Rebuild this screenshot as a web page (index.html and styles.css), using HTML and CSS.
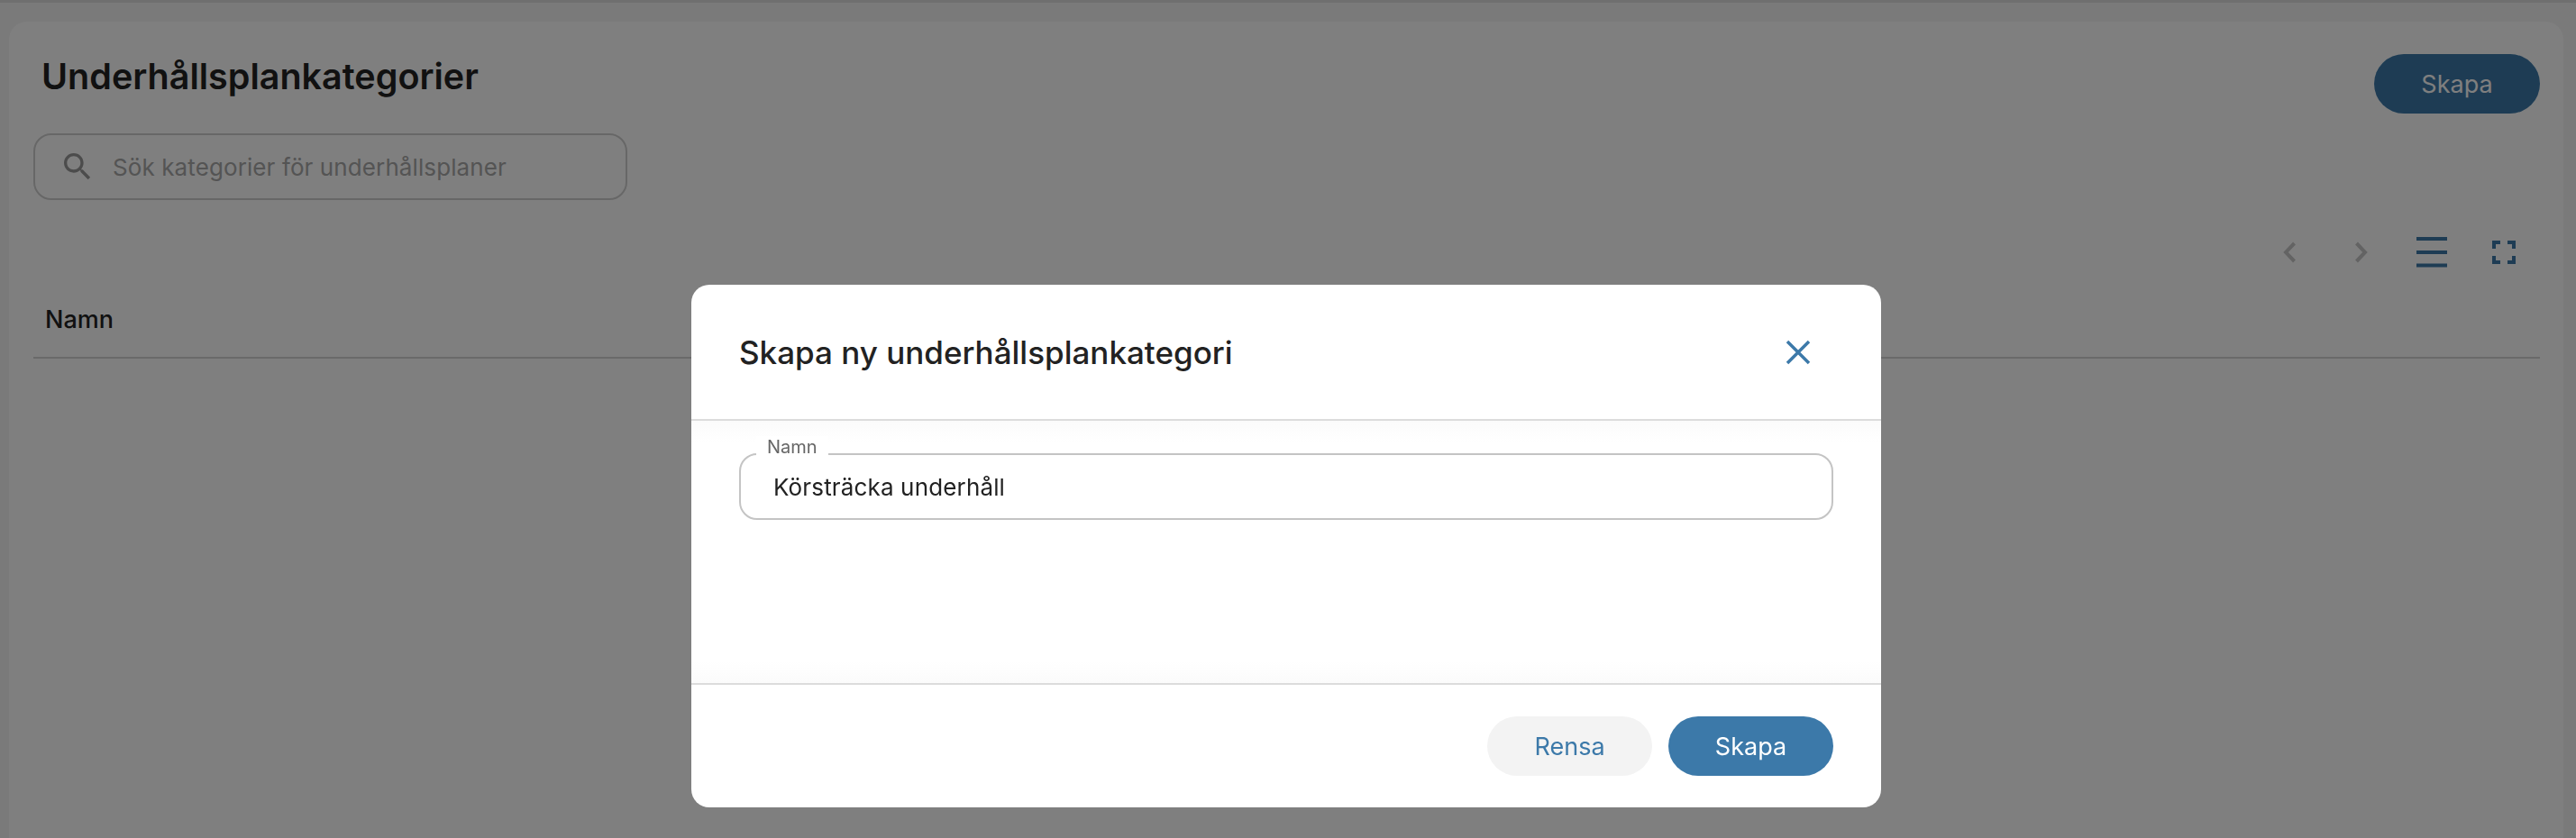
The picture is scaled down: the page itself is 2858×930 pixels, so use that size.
FILE: index.html
```html
<!DOCTYPE html>
<html lang="en">
<head>
    <meta charset="UTF-8">
    <meta name="viewport" content="width=device-width, initial-scale=1.0">
    <title>Underhållsplankategorier</title>
    <link rel="stylesheet" href="styles.css">
</head>
<body>
    <div class="page">
        <div class="card">
            <div class="card-header">
                <h1>Underhållsplankategorier</h1>
                <button type="button" class="btn btn-primary">Skapa</button>
            </div>
            <div class="search">
                <svg class="search-icon" viewBox="0 0 24 24"><path d="M15.5 14h-.79l-.28-.27C15.41 12.59 16 11.11 16 9.5 16 5.91 13.09 3 9.5 3S3 5.91 3 9.5 5.91 16 9.5 16c1.61 0 3.09-.59 4.23-1.57l.27.28v.79l5 4.99L20.49 19l-4.99-5zm-6 0C7.01 14 5 11.99 5 9.5S7.01 5 9.5 5 14 7.01 14 9.5 11.99 14 9.5 14z"/></svg>
                <input type="text" placeholder="Sök kategorier för underhållsplaner">
            </div>
            <div class="toolbar">
                <span class="tool tool-muted">
                    <svg width="14" height="24" viewBox="0 0 14 24"><path d="M12.5 2 3 12l9.5 10"/></svg>
                </span>
                <span class="tool tool-muted">
                    <svg width="14" height="24" viewBox="0 0 14 24"><path d="M1.500 2 11 12 1.500 22"/></svg>
                </span>
                <span class="tool">
                    <svg width="34" height="34" viewBox="0 0 34 34"><path d="M0 2h34M0 17h34M0 31.500h34"/></svg>
                </span>
                <span class="tool">
                    <svg width="26" height="26" viewBox="0 0 26 26"><path d="M2 9V2h7M17 2h7v7M24 17v7h-7M9 24H2v-7"/></svg>
                </span>
            </div>
            <div class="table-head">Namn</div>
        </div>
    </div>

    <div class="overlay">
        <div class="dialog">
            <div class="dialog-header">
                <h2>Skapa ny underhållsplankategori</h2>
                <button type="button" class="dialog-close">
                    <svg width="28" height="28" viewBox="0 0 28 28"><path d="M2 2l24 24M26 2 2 26"/></svg>
                </button>
            </div>
            <div class="dialog-body">
                <div class="field">
                    <label for="namn">Namn</label>
                    <input type="text" id="namn" value="Körsträcka underhåll">
                </div>
            </div>
            <div class="dialog-footer">
                <button type="button" class="btn btn-light">Rensa</button>
                <button type="button" class="btn btn-main">Skapa</button>
            </div>
        </div>
    </div>
</body>
</html>
```

FILE: styles.css
```css
* {
    box-sizing: border-box;
}
body {
    font-family: Inter, "Liberation Sans", sans-serif;
    background-color: #f4f4f4;
    color: #222;
    margin: 0;
    height: 100vh;
    overflow: hidden;
}
.page {
    height: 100%;
    border-top: 3px solid #dedede;
    padding: 21px 14px 0 10px;
}
.card {
    background: white;
    border-radius: 20px 20px 0 0;
    height: 100%;
    padding: 36px 26px 0 27px;
}
.card-header {
    display: flex;
    justify-content: space-between;
    align-items: flex-start;
}
h1 {
    font-size: 39.5px;
    line-height: 44px;
    font-weight: 600;
    margin: 3px 0 0 9px;
}
.btn {
    width: 184px;
    height: 66px;
    border: none;
    border-radius: 33px;
    font-family: inherit;
    font-size: 27px;
    cursor: pointer;
}
.btn-primary,
.btn-main {
    background-color: #3c79a9;
    color: white;
}
.btn-light {
    background-color: #f3f3f3;
    color: #3c79a9;
}
.search {
    display: flex;
    align-items: center;
    width: 659px;
    height: 74px;
    margin-top: 22px;
    padding-left: 27px;
    border: 2px solid #cfcfcf;
    border-radius: 20px;
}
.search-icon {
    width: 40px;
    height: 40px;
    fill: #999;
    flex-shrink: 0;
}
.search input {
    flex: 1;
    min-width: 0;
    margin-left: 19px;
    border: none;
    outline: none;
    padding: 0;
    background: none;
    font-family: inherit;
    font-size: 26px;
    letter-spacing: 0.1px;
}
.search input::placeholder {
    color: #a8a8a8;
    opacity: 1;
}
.toolbar {
    display: flex;
    justify-content: flex-end;
    height: 44px;
    margin-top: 36px;
}
.tool {
    display: flex;
    align-items: center;
    justify-content: center;
    width: 80px;
    stroke: #3c79a9;
}
.tool svg {
    fill: none;
    stroke-width: 4;
}
.tool-muted {
    stroke: #c6c6c6;
    position: relative;
    left: 2px;
}
.table-head {
    padding: 36px 0 24px 13px;
    font-size: 27px;
    line-height: 34px;
    font-weight: 500;
    border-bottom: 2px solid #d4d4d4;
}
.overlay {
    position: fixed;
    top: 0;
    left: 0;
    width: 100%;
    height: 100%;
    display: flex;
    justify-content: center;
    align-items: flex-start;
    padding: 316px 4px 0 0;
    background: rgba(0,0,0,0.5);
}
.dialog {
    width: 1320px;
    height: 580px;
    background: white;
    border-radius: 20px;
    display: flex;
    flex-direction: column;
}
.dialog-header {
    display: flex;
    justify-content: space-between;
    align-items: center;
    height: 151px;
    padding: 0 53px;
    border-bottom: 2px solid #dcdcdc;
}
h2 {
    font-size: 35px;
    line-height: 44px;
    font-weight: 500;
    margin: 0;
}
.dialog-close {
    width: 78px;
    height: 60px;
    padding: 0;
    border: none;
    background: none;
    stroke: #3c79a9;
    cursor: pointer;
}
.dialog-close svg {
    display: block;
    margin: auto;
    fill: none;
    stroke-width: 3.500;
}
.dialog-body {
    flex: 1;
    padding: 36px 53px 0;
    background:
        linear-gradient(#fbfbfb, white) top / 100% 24px no-repeat,
        linear-gradient(white, #fbfbfb) bottom / 100% 24px no-repeat;
}
.field {
    position: relative;
    height: 74px;
    border: 2px solid #c4c4c4;
    border-radius: 20px;
    background: white;
}
.field label {
    position: absolute;
    top: -21px;
    left: 17px;
    padding: 0 12px;
    background: white;
    color: #666;
    font-size: 20px;
    line-height: 24px;
    height: 22px;
}
.field input {
    width: 100%;
    height: 100%;
    padding: 0 0 0 36px;
    border: none;
    outline: none;
    background: none;
    border-radius: 20px;
    font-family: inherit;
    font-size: 26px;
    letter-spacing: 0.15px;
    color: #222;
}
.dialog-footer {
    display: flex;
    justify-content: flex-end;
    gap: 18px;
    height: 138px;
    padding: 35px 53px 0;
    border-top: 2px solid #dcdcdc;
}
.dialog-footer .btn {
    width: 183px;
}
```
